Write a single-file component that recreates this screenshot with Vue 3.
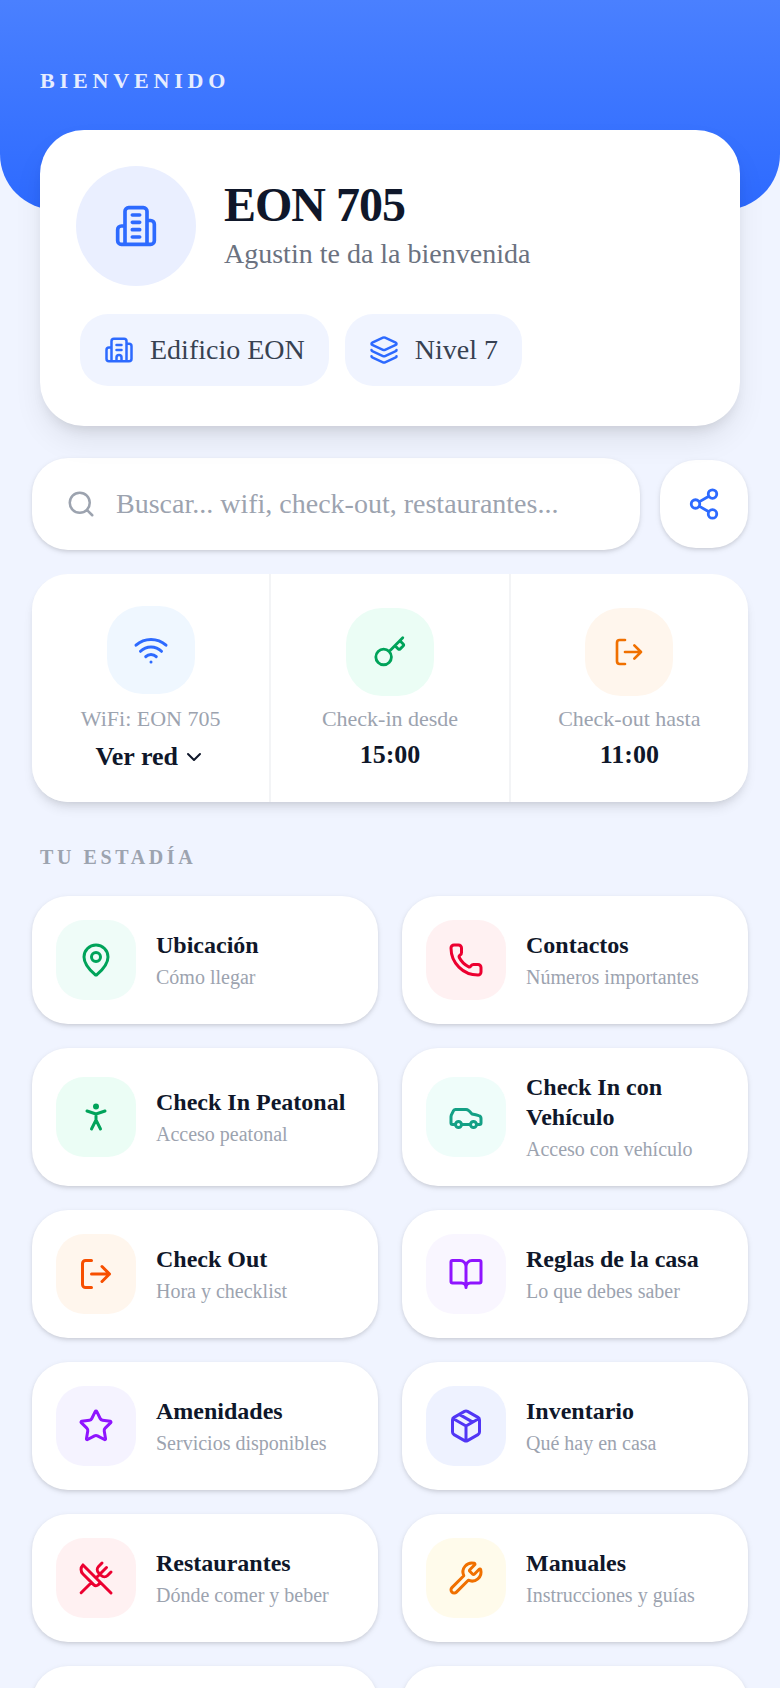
<template>
  <div class="page">
    <header class="page-header">
      <p class="eyebrow">Bienvenido</p>
    </header>

    <section class="hero-card">
      <div class="hero-main">
        <div class="hero-avatar">
          <svg class="icon icon-xl" viewBox="0 0 24 24"><path :d="icons.tower" /></svg>
        </div>
        <div>
          <h1>EON 705</h1>
          <p class="hero-subtitle">Agustin te da la bienvenida</p>
        </div>
      </div>
      <div class="chips">
        <span v-for="chip in chips" :key="chip.label" class="chip">
          <svg class="icon icon-sm" viewBox="0 0 24 24"><path :d="icons[chip.icon]" /></svg>
          {{ chip.label }}
        </span>
      </div>
    </section>

    <main class="content">
      <div class="search-row">
        <label class="search-box">
          <svg class="icon icon-sm" viewBox="0 0 24 24"><path :d="icons.search" /></svg>
          <input v-model="query" type="text" aria-label="Buscar" placeholder="Buscar... wifi, check-out, restaurantes..." />
        </label>
        <button class="share-btn" type="button" aria-label="Compartir">
          <svg class="icon icon-md" viewBox="0 0 24 24"><path :d="icons.share" /></svg>
        </button>
      </div>

      <section class="stats">
        <button class="stat stat-action" type="button">
          <span class="stat-icon sky">
            <svg class="icon icon-lg" viewBox="0 0 24 24"><path :d="icons.wifi" /></svg>
          </span>
          <span class="stat-label">WiFi: EON 705</span>
          <span class="stat-value">
            Ver red
            <svg class="icon icon-xs" viewBox="0 0 24 24"><path :d="icons.chevron" /></svg>
          </span>
        </button>
        <div class="stat">
          <span class="stat-icon green">
            <svg class="icon icon-md" viewBox="0 0 24 24"><path :d="icons.key" /></svg>
          </span>
          <span class="stat-label">Check-in desde</span>
          <span class="stat-value">15:00</span>
        </div>
        <div class="stat">
          <span class="stat-icon amber">
            <svg class="icon icon-base" viewBox="0 0 24 24"><path :d="icons.logout" /></svg>
          </span>
          <span class="stat-label">Check-out hasta</span>
          <span class="stat-value">11:00</span>
        </div>
      </section>

      <h2>Tu estadía</h2>
      <div class="grid">
        <button v-for="item in items" :key="item.title" class="tile" type="button">
          <span :class="['tile-icon', item.tone]">
            <svg class="icon icon-lg" viewBox="0 0 24 24"><path :d="icons[item.icon]" /></svg>
          </span>
          <span class="tile-text">
            <span class="tile-title">{{ item.title }}</span>
            <span class="tile-desc">{{ item.desc }}</span>
          </span>
        </button>
        <div class="tile tile-empty"></div>
        <div class="tile tile-empty"></div>
      </div>
    </main>
  </div>
</template>

<script setup>
import { ref } from 'vue';

const query = ref('');

const circle = (cx, cy, r) => `M${cx - r} ${cy}a${r} ${r} 0 1 0 ${r * 2} 0a${r} ${r} 0 1 0 ${-r * 2} 0`;

const icons = {
  tower: 'M6 22V4a2 2 0 0 1 2-2h8a2 2 0 0 1 2 2v18ZM6 12H4a2 2 0 0 0-2 2v6a2 2 0 0 0 2 2h2M18 9h2a2 2 0 0 1 2 2v9a2 2 0 0 1-2 2h-2M10 6h4M10 10h4M10 14h4M10 18h4',
  building: 'M10 12h4M10 8h4M14 21v-3a2 2 0 0 0-4 0v3M6 10H4a2 2 0 0 0-2 2v7a2 2 0 0 0 2 2h16a2 2 0 0 0 2-2V9a2 2 0 0 0-2-2h-2M6 21V5a2 2 0 0 1 2-2h8a2 2 0 0 1 2 2v16',
  layers: 'M12.83 2.18a2 2 0 0 0-1.66 0L2.6 6.08a1 1 0 0 0 0 1.83l8.58 3.91a2 2 0 0 0 1.66 0l8.58-3.9a1 1 0 0 0 0-1.83zM2 12a1 1 0 0 0 .58.91l8.6 3.91a2 2 0 0 0 1.65 0l8.58-3.9A1 1 0 0 0 22 12M2 17a1 1 0 0 0 .58.91l8.6 3.91a2 2 0 0 0 1.65 0l8.58-3.9A1 1 0 0 0 22 17',
  search: `m21 21-4.34-4.34${circle(11, 11, 8)}`,
  share: `${circle(18, 5, 3)}${circle(6, 12, 3)}${circle(18, 19, 3)}M8.59 13.51l6.83 3.98M15.41 6.51l-6.82 3.98`,
  wifi: 'M12 20h.01M2 8.82a15 15 0 0 1 20 0M5 12.859a10 10 0 0 1 14 0M8.5 16.429a5 5 0 0 1 7 0',
  chevron: 'm6 9 6 6 6-6',
  key: `m15.5 7.5 2.3 2.3a1 1 0 0 0 1.4 0l2.1-2.1a1 1 0 0 0 0-1.4L19 4M21 2l-9.6 9.6${circle(7.5, 15.5, 5.5)}`,
  logout: 'm16 17 5-5-5-5M21 12H9M9 21H5a2 2 0 0 1-2-2V5a2 2 0 0 1 2-2h4',
  pin: `M20 10c0 4.993-5.539 10.193-7.399 11.799a1 1 0 0 1-1.202 0C9.539 20.193 4 14.993 4 10a8 8 0 0 1 16 0${circle(12, 10, 3)}`,
  phone: 'M13.832 16.568a1 1 0 0 0 1.213-.303l.355-.465A2 2 0 0 1 17 15h3a2 2 0 0 1 2 2v3a2 2 0 0 1-2 2A18 18 0 0 1 2 4a2 2 0 0 1 2-2h3a2 2 0 0 1 2 2v3a2 2 0 0 1-.8 1.6l-.468.351a1 1 0 0 0-.292 1.233 14 14 0 0 0 6.392 6.384',
  person: `${circle(12, 5, 1)}M9 20l3-6 3 6M6 8l6 2 6-2M12 10v4`,
  car: `M19 17h2c.6 0 1-.4 1-1v-3c0-.9-.7-1.7-1.5-1.9C18.7 10.6 16 10 16 10s-1.3-1.4-2.2-2.3c-.5-.4-1.1-.7-1.8-.7H5c-.6 0-1.1.4-1.4.9l-1.4 2.9A3.7 3.7 0 0 0 2 12v4c0 .6.4 1 1 1h2M9 17h6${circle(7, 17, 2)}${circle(17, 17, 2)}`,
  book: 'M12 7v14M3 18a1 1 0 0 1-1-1V4a1 1 0 0 1 1-1h5a4 4 0 0 1 4 4 4 4 0 0 1 4-4h5a1 1 0 0 1 1 1v13a1 1 0 0 1-1 1h-6a3 3 0 0 0-3 3 3 3 0 0 0-3-3z',
  star: 'M11.525 2.295a.53.53 0 0 1 .95 0l2.31 4.679a2.123 2.123 0 0 0 1.595 1.16l5.166.756a.53.53 0 0 1 .294.904l-3.736 3.638a2.123 2.123 0 0 0-.611 1.878l.882 5.14a.53.53 0 0 1-.771.56l-4.618-2.428a2.122 2.122 0 0 0-1.973 0L6.396 21.01a.53.53 0 0 1-.77-.56l.881-5.139a2.122 2.122 0 0 0-.611-1.879L2.16 9.795a.53.53 0 0 1 .294-.906l5.165-.755a2.122 2.122 0 0 0 1.597-1.16z',
  box: 'M11 21.73a2 2 0 0 0 2 0l7-4A2 2 0 0 0 21 16V8a2 2 0 0 0-1-1.73l-7-4a2 2 0 0 0-2 0l-7 4A2 2 0 0 0 3 8v8a2 2 0 0 0 1 1.73zM12 22V12M3.29 7 12 12l8.71-5M7.5 4.27l9 5.15',
  utensils: 'm16 2-2.3 2.3a3 3 0 0 0 0 4.2l1.8 1.8a3 3 0 0 0 4.2 0L22 8M15 15 3.3 3.3a4.2 4.2 0 0 0 0 6l7.3 7.3c.7.7 2 .7 2.8 0L15 15Zm0 0 7 7M2.1 21.8l6.4-6.3M19 5l-7 7',
  wrench: 'M14.7 6.3a1 1 0 0 0 0 1.4l1.6 1.6a1 1 0 0 0 1.4 0l3.106-3.105c.32-.322.863-.22.983.218a6 6 0 0 1-8.259 7.057l-7.91 7.91a1 1 0 0 1-2.999-3l7.91-7.91a6 6 0 0 1 7.057-8.259c.438.12.54.662.219.984z',
};

const chips = [
  { icon: 'building', label: 'Edificio EON' },
  { icon: 'layers', label: 'Nivel 7' },
];

const items = [
  { icon: 'pin', tone: 'mint', title: 'Ubicación', desc: 'Cómo llegar' },
  { icon: 'phone', tone: 'red', title: 'Contactos', desc: 'Números importantes' },
  { icon: 'person', tone: 'green', title: 'Check In Peatonal', desc: 'Acceso peatonal' },
  { icon: 'car', tone: 'teal', title: 'Check In con Vehículo', desc: 'Acceso con vehículo' },
  { icon: 'logout', tone: 'orange', title: 'Check Out', desc: 'Hora y checklist' },
  { icon: 'book', tone: 'purple', title: 'Reglas de la casa', desc: 'Lo que debes saber' },
  { icon: 'star', tone: 'violet', title: 'Amenidades', desc: 'Servicios disponibles' },
  { icon: 'box', tone: 'indigo', title: 'Inventario', desc: 'Qué hay en casa' },
  { icon: 'utensils', tone: 'red', title: 'Restaurantes', desc: 'Dónde comer y beber' },
  { icon: 'wrench', tone: 'yellow', title: 'Manuales', desc: 'Instrucciones y guías' },
];
</script>

<style>
body { margin: 0; background: #f0f4ff; }
</style>

<style scoped>
.page { height: 100vh; overflow: hidden; background: #f0f4ff; color: #0f172a; font-family: "Liberation Serif", "Times New Roman", serif; }
button { border: none; font: inherit; color: inherit; cursor: pointer; }
h1, h2, p { margin: 0; }
.icon { display: block; flex-shrink: 0; fill: none; stroke: currentColor; stroke-width: 2; stroke-linecap: round; stroke-linejoin: round; }
.icon-xs { width: 24px; height: 24px; }
.icon-sm { width: 30px; height: 30px; }
.icon-base { width: 32px; height: 32px; }
.icon-md { width: 34px; height: 34px; }
.icon-lg { width: 36px; height: 36px; }
.icon-xl { width: 44px; height: 44px; }

.page-header { height: 210px; box-sizing: border-box; padding: 68px 40px 0; background: linear-gradient(#4a80ff, #2d6aff); border-radius: 0 0 56px 56px; }
.eyebrow { font-size: 22px; line-height: 26px; font-weight: 700; letter-spacing: 0.22em; text-transform: uppercase; color: #e6edff; }

.hero-card { position: relative; margin: -80px 40px 0; padding: 36px 36px 40px; background: #fff; border-radius: 44px; box-shadow: 0 16px 30px -2px rgba(0, 0, 0, 0.08), 0 8px 14px -6px rgba(0, 0, 0, 0.12); }
.hero-main { display: flex; align-items: center; gap: 28px; }
.hero-avatar { width: 120px; height: 120px; border-radius: 50%; background: #eaefff; color: #2d6aff; display: flex; align-items: center; justify-content: center; }
h1 { font-size: 48px; line-height: 56px; font-weight: 700; letter-spacing: -1px; }
.hero-subtitle { font-size: 28px; line-height: 42px; color: #6b7280; }
.chips { display: flex; flex-wrap: wrap; gap: 16px; padding: 28px 4px 0; }
.chip { display: flex; align-items: center; gap: 16px; height: 72px; padding: 0 24px; border-radius: 28px; background: #f0f4ff; font-size: 28px; color: #374151; }
.chip .icon { color: #2d6aff; }

.content { padding: 32px 32px 0; }
.search-row { display: flex; align-items: center; gap: 20px; }
.search-box { flex: 1; display: flex; align-items: center; gap: 20px; height: 92px; box-sizing: border-box; padding: 0 34px; background: #fff; border-radius: 36px; color: #9ca3af; box-shadow: 0 2px 6px rgba(0, 0, 0, 0.08), 0 2px 4px -1px rgba(0, 0, 0, 0.12); }
.search-box input { flex: 1; min-width: 0; padding: 0; border: none; outline: none; background: transparent; font: inherit; font-size: 28px; color: #0f172a; }
.search-box input::placeholder { color: #9ca3af; opacity: 1; }
.share-btn { width: 88px; height: 88px; padding: 0; background: #fff; border-radius: 36px; color: #2d6aff; display: flex; align-items: center; justify-content: center; box-shadow: 0 2px 6px rgba(0, 0, 0, 0.08), 0 2px 4px -1px rgba(0, 0, 0, 0.12); }

.stats { display: grid; grid-template-columns: repeat(3, 1fr); gap: 2px; margin-top: 24px; overflow: hidden; background: #f3f4f6; border-radius: 36px; box-shadow: 0 8px 12px -2px rgba(0, 0, 0, 0.09), 0 4px 8px -4px rgba(0, 0, 0, 0.12); }
.stat { display: flex; flex-direction: column; align-items: center; justify-content: center; gap: 10px; padding: 32px 8px; background: #fff; }
.stat-action { gap: 12px; }
.stat-icon { width: 88px; height: 88px; border-radius: 36px; display: flex; align-items: center; justify-content: center; }
.stat-label { font-size: 22px; line-height: 26px; color: #9ca3af; }
.stat-value { display: flex; align-items: center; gap: 4px; font-size: 26px; line-height: 26px; font-weight: 700; }

h2 { margin: 44px 8px 28px; font-size: 20px; line-height: 22px; font-weight: 700; letter-spacing: 0.18em; text-transform: uppercase; color: #9ca3af; }
.grid { display: grid; grid-template-columns: 1fr 1fr; gap: 24px; }
.tile { display: flex; align-items: center; gap: 20px; padding: 24px; background: #fff; border-radius: 36px; text-align: left; box-shadow: 0 2px 6px rgba(0, 0, 0, 0.08), 0 2px 4px -1px rgba(0, 0, 0, 0.12); }
.tile-empty { height: 80px; }
.tile-icon { width: 80px; height: 80px; flex-shrink: 0; border-radius: 28px; display: flex; align-items: center; justify-content: center; }
.tile-text { display: flex; flex-direction: column; gap: 4px; min-width: 0; }
.tile-title { font-size: 24px; line-height: 30px; font-weight: 700; }
.tile-desc { font-size: 20px; line-height: 26px; color: #9ca3af; }

.sky { background: #eff7ff; color: #2d6aff; }
.mint { background: #effcf8; color: #00a35a; }
.green { background: #ebfdf5; color: #00a35a; }
.teal { background: #effdfa; color: #14a085; }
.red { background: #fff1f2; color: #ec0030; }
.amber { background: #fff6ed; color: #f07000; }
.orange { background: #fff6ed; color: #f74f00; }
.purple { background: #f9f6ff; color: #8f14ff; }
.violet { background: #f5f3ff; color: #8f14ff; }
.indigo { background: #eef2ff; color: #5136f5; }
.yellow { background: #fffbeb; color: #f07000; }
</style>
